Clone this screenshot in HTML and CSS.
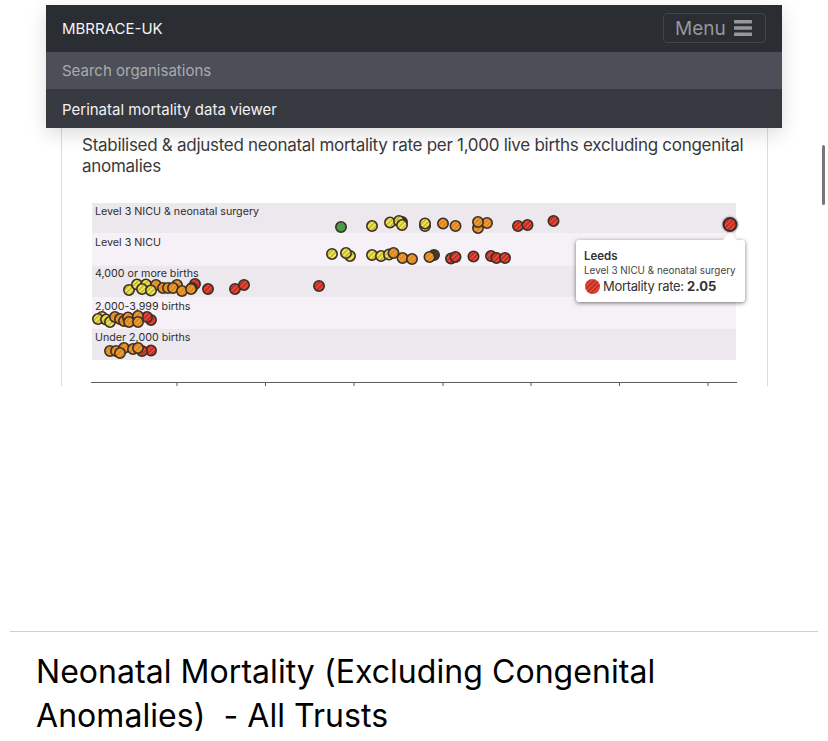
FILE: index.html
```html
<!DOCTYPE html>
<html>
<head>
    <title>Neonatal Mortality - All Trusts</title>
    <link rel="stylesheet" href="styles.css">
</head>
<body>
    <div class="scroll-thumb"></div>
    <div class="site-header">
        <div class="brand-row">
            <span class="brand">MBRRACE-UK</span>
            <div class="menu-btn">
                Menu
                <svg class="menu-icon" viewBox="0 0 18 16" width="18" height="16">
                    <rect x="0" y="0" width="18" height="3.4" rx="0.6"/>
                    <rect x="0" y="6.3" width="18" height="3.4" rx="0.6"/>
                    <rect x="0" y="12.6" width="18" height="3.4" rx="0.6"/>
                </svg>
            </div>
        </div>
        <div class="search-row">Search organisations</div>
        <div class="viewer-row">Perinatal mortality data viewer</div>
    </div>

    <div class="card">
        <div class="card-title">Stabilised &amp; adjusted neonatal mortality rate per 1,000 live births excluding congenital anomalies</div>
        <div class="chart">
            <svg class="chart-svg" viewBox="62 195 704 191" width="704" height="191">
                <defs>
                    <pattern id="stripe-yellow" width="3.4" height="3.4" patternUnits="userSpaceOnUse" patternTransform="rotate(-45)">
                        <rect width="3.4" height="3.4" fill="#f3e650"/>
                        <rect width="3.4" height="1.3" fill="#b3ad35"/>
                    </pattern>
                    <pattern id="stripe-orange" width="3.4" height="3.4" patternUnits="userSpaceOnUse" patternTransform="rotate(-45)">
                        <rect width="3.4" height="3.4" fill="#f09c2e"/>
                        <rect width="3.4" height="1.3" fill="#d08026"/>
                    </pattern>
                    <pattern id="stripe-red" width="3.4" height="3.4" patternUnits="userSpaceOnUse" patternTransform="rotate(-45)">
                        <rect width="3.4" height="3.4" fill="#ec4634"/>
                        <rect width="3.4" height="1.3" fill="#a82a26"/>
                    </pattern>
                </defs>

                <rect class="band-dark" x="92" y="203" width="644" height="30.5"/>
                <rect class="band-light" x="92" y="233.5" width="644" height="32"/>
                <rect class="band-dark" x="92" y="265.5" width="644" height="31.5"/>
                <rect class="band-light" x="92" y="297" width="644" height="32"/>
                <rect class="band-dark" x="92" y="329" width="644" height="31"/>

                <text class="band-label" x="95" y="215">Level 3 NICU &amp; neonatal surgery</text>
                <text class="band-label" x="95" y="246">Level 3 NICU</text>
                <text class="band-label" x="95" y="277">4,000 or more births</text>
                <text class="band-label" x="95" y="309.5">2,000-3,999 births</text>
                <text class="band-label" x="95" y="341">Under 2,000 births</text>

                <!-- level 3 nicu & surgery -->
                <circle class="dot green" cx="341" cy="227" r="5.2"/>
                <circle class="dot yellow" cx="372" cy="226" r="5.2"/>
                <circle class="dot yellow" cx="390" cy="222.5" r="5.2"/>
                <circle class="dot dark" cx="402" cy="222" r="5.2"/>
                <circle class="dot yellow" cx="399" cy="221" r="5.2"/>
                <circle class="dot yellow" cx="402" cy="225" r="5.2"/>
                <circle class="dot yellow" cx="425" cy="226" r="5.2"/>
                <circle class="dot yellow" cx="425" cy="223.5" r="5.2"/>
                <circle class="dot orange" cx="443" cy="223.5" r="5.2"/>
                <circle class="dot orange" cx="455.5" cy="226" r="5.2"/>
                <circle class="dot orange" cx="478" cy="228" r="5.2"/>
                <circle class="dot orange" cx="487" cy="223" r="5.2"/>
                <circle class="dot orange" cx="478" cy="222" r="5.2"/>
                <circle class="dot red" cx="518" cy="226" r="5.2"/>
                <circle class="dot red" cx="527.5" cy="225" r="5.2"/>
                <circle class="dot red" cx="553.5" cy="221" r="5.2"/>

                <!-- level 3 nicu -->
                <circle class="dot yellow" cx="332" cy="254" r="5.2"/>
                <circle class="dot yellow" cx="350" cy="256" r="5.2"/>
                <circle class="dot yellow" cx="346" cy="253" r="5.2"/>
                <circle class="dot yellow" cx="372" cy="255" r="5.2"/>
                <circle class="dot yellow" cx="381" cy="256" r="5.2"/>
                <circle class="dot yellow" cx="389" cy="254.5" r="5.2"/>
                <circle class="dot orange" cx="393.5" cy="253" r="5.2"/>
                <circle class="dot orange" cx="402.5" cy="258" r="5.2"/>
                <circle class="dot orange" cx="412" cy="259" r="5.2"/>
                <circle class="dot dark" cx="434" cy="255" r="5.2"/>
                <circle class="dot orange" cx="429.5" cy="257" r="5.2"/>
                <circle class="dot red" cx="451" cy="258.5" r="5.2"/>
                <circle class="dot red" cx="455.5" cy="257" r="5.2"/>
                <circle class="dot red" cx="473.5" cy="256.5" r="5.2"/>
                <circle class="dot red" cx="491" cy="256" r="5.2"/>
                <circle class="dot red" cx="496.5" cy="258" r="5.2"/>
                <circle class="dot red" cx="505" cy="258" r="5.2"/>

                <!-- 4,000 or more -->
                <circle class="dot yellow" cx="129" cy="290" r="5.2"/>
                <circle class="dot yellow" cx="137" cy="284.5" r="5.2"/>
                <circle class="dot yellow" cx="146" cy="284.5" r="5.2"/>
                <circle class="dot yellow" cx="142" cy="289" r="5.2"/>
                <circle class="dot orange" cx="156" cy="285" r="5.2"/>
                <circle class="dot yellow" cx="151" cy="290.5" r="5.2"/>
                <circle class="dot orange" cx="163" cy="288" r="5.2"/>
                <circle class="dot orange" cx="168" cy="288" r="5.2"/>
                <circle class="dot orange" cx="177" cy="285" r="5.2"/>
                <circle class="dot orange" cx="173" cy="288" r="5.2"/>
                <circle class="dot red" cx="195" cy="284" r="5.2"/>
                <circle class="dot red" cx="192" cy="288" r="5.2"/>
                <circle class="dot orange" cx="182" cy="291" r="5.2"/>
                <circle class="dot orange" cx="191" cy="289" r="5.2"/>
                <circle class="dot red" cx="208" cy="289" r="5.2"/>
                <circle class="dot red" cx="235" cy="289" r="5.2"/>
                <circle class="dot red" cx="244" cy="285" r="5.2"/>
                <circle class="dot red" cx="319" cy="286" r="5.2"/>

                <!-- 2,000-3,999 -->
                <circle class="dot yellow" cx="102" cy="317" r="5.2"/>
                <circle class="dot yellow" cx="98" cy="319" r="5.2"/>
                <circle class="dot yellow" cx="106" cy="319.5" r="5.2"/>
                <circle class="dot yellow" cx="110" cy="322" r="5.2"/>
                <circle class="dot orange" cx="115" cy="317" r="5.2"/>
                <circle class="dot orange" cx="120" cy="319" r="5.2"/>
                <circle class="dot orange" cx="124" cy="321" r="5.2"/>
                <circle class="dot orange" cx="128" cy="317.5" r="5.2"/>
                <circle class="dot orange" cx="129" cy="322" r="5.2"/>
                <circle class="dot red" cx="151" cy="320" r="5.2"/>
                <circle class="dot red" cx="147" cy="317" r="5.2"/>
                <circle class="dot orange" cx="138" cy="316" r="5.2"/>
                <circle class="dot orange" cx="138" cy="322" r="5.2"/>

                <!-- under 2,000 -->
                <circle class="dot orange" cx="110" cy="351" r="5.2"/>
                <circle class="dot orange" cx="116" cy="351" r="5.2"/>
                <circle class="dot orange" cx="124" cy="348" r="5.2"/>
                <circle class="dot orange" cx="120" cy="353" r="5.2"/>
                <circle class="dot orange" cx="133" cy="349" r="5.2"/>
                <circle class="dot red" cx="151" cy="350.5" r="5.2"/>
                <circle class="dot red" cx="142" cy="351" r="5.2"/>
                <circle class="dot orange" cx="138" cy="348" r="5.2"/>

                <circle class="dot-halo" cx="730" cy="224.5" r="9"/>
                <circle class="dot-active" cx="730" cy="224.5" r="6.5"/>

                <line class="axis" x1="91" y1="382.5" x2="737" y2="382.5"/>
                <line class="axis" x1="177" y1="382" x2="177" y2="386"/>
                <line class="axis" x1="265.5" y1="382" x2="265.5" y2="386"/>
                <line class="axis" x1="354" y1="382" x2="354" y2="386"/>
                <line class="axis" x1="443" y1="382" x2="443" y2="386"/>
                <line class="axis" x1="531" y1="382" x2="531" y2="386"/>
                <line class="axis" x1="619.5" y1="382" x2="619.5" y2="386"/>
                <line class="axis" x1="708" y1="382" x2="708" y2="386"/>
            </svg>

            <div class="tooltip">
                <div class="tooltip-name">Leeds</div>
                <div class="tooltip-group">Level 3 NICU &amp; neonatal surgery</div>
                <div class="tooltip-rate">
                    <svg class="tooltip-dot" viewBox="0 0 15 15" width="15" height="15">
                        <circle cx="7.5" cy="7.5" r="7.5" fill="url(#stripe-red)"/>
                    </svg>
                    <span class="tooltip-text">Mortality rate: <b class="tooltip-value">2.05</b></span>
                </div>
            </div>
        </div>
    </div>

    <hr class="divider">
    <h1 class="page-title">Neonatal Mortality (Excluding Congenital Anomalies)&nbsp; - All Trusts</h1>
</body>
</html>
```

FILE: styles.css
```css
html, body {
    height: 741px;
    overflow: hidden;
}

body {
    margin: 0;
    padding-top: 5px;
    box-sizing: border-box;
    background-color: #fff;
    font-family: Inter, "Liberation Sans", sans-serif;
    color: #333;
}

.scroll-thumb {
    position: absolute;
    left: 822px;
    top: 145px;
    width: 3px;
    height: 60px;
    border-radius: 2px;
    background-color: #77777a;
}

.site-header {
    position: relative;
    z-index: 2;
    margin: 0 46px;
    width: 736px;
    box-shadow: 0 6px 18px rgba(0, 0, 0, 0.14);
}

.brand-row {
    display: flex;
    justify-content: space-between;
    align-items: flex-start;
    height: 47px;
    padding: 8px 16px 0;
    box-sizing: border-box;
    background-color: #2a2d32;
}

.brand {
    color: #f4f4f5;
    font-size: 15px;
    line-height: 32px;
}

.menu-btn {
    display: flex;
    align-items: center;
    gap: 8px;
    height: 30px;
    width: 103px;
    box-sizing: border-box;
    padding-left: 11px;
    border: 1px solid #41444a;
    border-radius: 4px;
    color: #94979b;
    font-size: 19px;
}

.menu-icon {
    fill: #94979b;
}

.search-row {
    height: 37px;
    line-height: 38px;
    padding-left: 16px;
    background-color: #4c4f57;
    color: #a9abb0;
    font-size: 15px;
}

.viewer-row {
    height: 39px;
    line-height: 41px;
    padding-left: 16px;
    background-color: #363940;
    color: #f2f2f3;
    font-size: 15px;
}

.card {
    position: relative;
    box-sizing: border-box;
    width: 707px;
    height: 258px;
    margin-left: 61px;
    border-left: 1px solid #dcdcdf;
    border-right: 1px solid #dcdcdf;
}

.card-title {
    padding: 7px 10px 0 20px;
    font-size: 17px;
    letter-spacing: -0.28px;
    line-height: 21px;
    color: #3a3a3c;
}

.chart-svg {
    position: absolute;
    left: 0;
    top: 67px;
}

.band-dark {
    fill: #ece8ee;
}

.band-light {
    fill: #f5f1f7;
}

.band-label {
    font-size: 10.7px;
    fill: #2e2e30;
}

.dot {
    stroke: #3b2f25;
    stroke-width: 1.6;
}

.green {
    fill: #4a9a4c;
}

.yellow {
    fill: url(#stripe-yellow);
}

.orange {
    fill: url(#stripe-orange);
}

.red {
    fill: url(#stripe-red);
}

.dark {
    fill: #4a3b26;
}

.dot-halo {
    fill: #d9c7cd;
}

.dot-active {
    fill: url(#stripe-red);
    stroke: #352a2a;
    stroke-width: 2;
}

.axis {
    stroke: #5c5c5c;
    stroke-width: 1;
}

.tooltip {
    position: absolute;
    left: 514px;
    top: 112px;
    width: 169px;
    height: 62px;
    box-sizing: border-box;
    padding: 9px 8px 0;
    background-color: #fff;
    border-radius: 3px;
    box-shadow: 0 1px 4px rgba(0, 0, 0, 0.55);
}

.tooltip::before {
    content: "";
    position: absolute;
    left: 149px;
    top: -5px;
    width: 10px;
    height: 10px;
    background-color: #fff;
    transform: rotate(45deg);
}

.tooltip-name {
    position: relative;
    font-size: 11.5px;
    font-weight: 600;
    line-height: 14px;
}

.tooltip-group {
    font-size: 9.9px;
    line-height: 14px;
    color: #444;
}

.tooltip-rate {
    display: flex;
    align-items: center;
    gap: 3px;
    font-size: 13px;
    line-height: 18px;
    margin-left: 1px;
}

.tooltip-text {
    letter-spacing: -0.33px;
}

.tooltip-value {
    letter-spacing: 0;
}

.tooltip-dot {
    flex: none;
}

.divider {
    margin: 245px 10px 0;
    border: none;
    border-top: 1px solid #cfcfd1;
}

.page-title {
    margin: 18px 0 0 36px;
    width: 700px;
    font-size: 32px;
    letter-spacing: 0.05px;
    font-weight: 400;
    line-height: 44px;
    color: #000;
}
```
